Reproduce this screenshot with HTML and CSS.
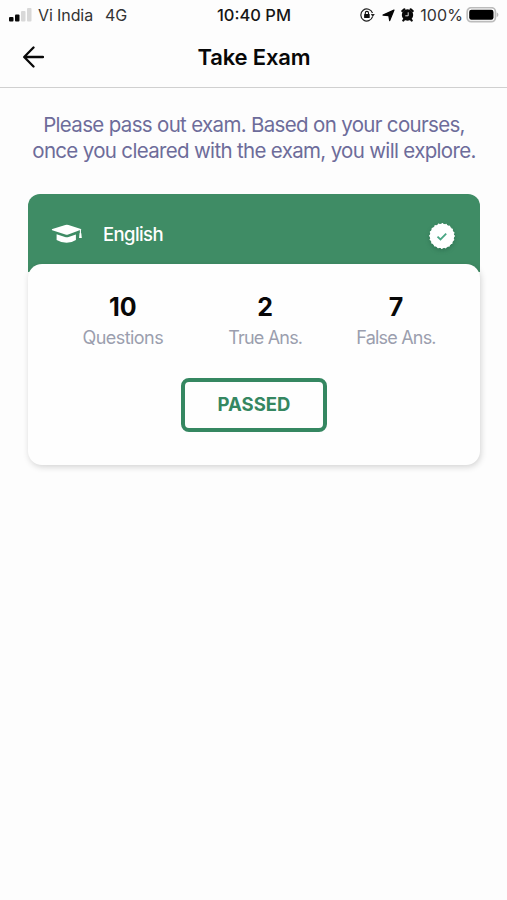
FILE: index.html
```html
<!DOCTYPE html>
<html lang="en">
<head>
<meta charset="utf-8">
<title>Take Exam</title>
<link rel="stylesheet" href="styles.css">
</head>
<body>
<div class="status">
  <div class="status-left">
    <svg class="signal" width="23" height="16" viewBox="0 0 23 16"><g fill="#090909"><rect x="0" y="10" width="4.500" height="4.500" rx="1"/><rect x="6" y="7.500" width="4.500" height="7" rx="1"/></g><g fill="#d8d8d8"><rect x="12" y="4" width="4.500" height="10.500" rx="1"/><rect x="18" y="1" width="4.500" height="13.500" rx="1"/></g></svg>
    <span class="carrier">Vi India</span><span class="network">4G</span>
  </div>
  <span class="clock">10:40 PM</span>
  <div class="status-right">
    <svg width="15" height="14" viewBox="0 0 15 14"><path d="M12.600 8.700A6 6 0 1 1 12.500 5" fill="none" stroke="#222" stroke-width="1.200"/><path d="M10.800 6h4l-2 2.900z" fill="#222"/><rect x="4.100" y="6" width="5.600" height="4" rx=".6" fill="#111"/><path d="M5.300 6.300V5a1.600 1.600 0 0 1 3.200 0v1.300" fill="none" stroke="#111" stroke-width="1.100"/></svg>
    <svg class="location" width="13" height="13" viewBox="0 0 13 13"><path d="M12 1 7.700 11.600 6.800 6.600 1 6.100z" fill="#050505" stroke="#050505" stroke-linejoin="round" stroke-width="1.200"/></svg>
    <svg class="alarm" width="13" height="14" viewBox="0 0 13 14"><circle cx="6.500" cy="7" r="5.700" fill="#080808"/><path d="M1.300 3 3.300 1.300M11.700 3 9.700 1.300M2.300 12.500l1.400-1.600M10.700 12.500l-1.400-1.600" stroke="#080808" stroke-width="2.200" stroke-linecap="round"/><path d="M7.200 4.300v3.500H4.300" fill="none" stroke="#ddd" stroke-width="1"/></svg>
    <span class="percent">100%</span>
    <svg class="battery" width="33" height="16" viewBox="0 0 33 16"><rect x="1.200" y=".7" width="28.200" height="14" rx="4" fill="#fff" stroke="#bcbcbc" stroke-width="1.700"/><rect x="3.200" y="2.700" width="24.300" height="10" rx="2.200" fill="#000"/><path d="M30.700 5.500q1.700.5 1.700 2.200t-1.700 2.200z" fill="#bcbcbc"/></svg>
  </div>
</div>
<header class="nav">
  <svg class="back" width="22" height="22" viewBox="0 0 22 22"><path d="M11.500 1.500 2.200 11l9.300 9.500M2.500 11H21" fill="none" stroke="#080808" stroke-width="2.300" stroke-linecap="round" stroke-linejoin="round"/></svg>
  <h1>Take Exam</h1>
</header>
<main>
  <p class="intro">Please pass out exam. Based on your courses,<br>once you cleared with the exam, you will explore.</p>
  <section class="exam">
    <div class="exam-head">
      <svg class="cap" width="32" height="20" viewBox="0 0 32 20"><path d="M1.200 6.200Q.2 5.500 1.400 5.100L14.300.9q1.600-.5 3.200 0l12.400 4q1.200.5 0 .9L17.200 10.500q-1.400.5-2.800 0z" fill="#fff"/><path d="M5.600 10.200 14 13q1.800.5 3.600 0l7.300-2.600v5.700q-3.700 2.600-9.300 2.600T5.600 16.100z" fill="#fff"/><path d="M29.400 5.600V10" stroke="#fff" stroke-width="1.100"/><path d="M28.500 9.200h1.800l.5 4.700h-2.700z" fill="#fff"/></svg>
      <h2>English</h2>
      <svg class="seal" width="26" height="26" viewBox="0 0 26 26"><circle cx="13" cy="13" r="12.200" fill="#fff"/><circle cx="13" cy="13" r="12" fill="none" stroke="#fff" stroke-width="1.800" stroke-linecap="round" stroke-dasharray=".1 3.670"/><path d="m8.500 13.600 3 2.900 5.700-5.900" fill="none" stroke="#4aa684" stroke-width="1.800"/></svg>
    </div>
    <div class="exam-body">
      <div class="stats">
        <div class="stat"><strong>10</strong><span>Questions</span></div>
        <div class="stat"><strong>2</strong><span>True Ans.</span></div>
        <div class="stat"><strong>7</strong><span>False Ans.</span></div>
      </div>
      <div class="result">PASSED</div>
    </div>
  </section>
</main>
</body>
</html>
```
FILE: styles.css
```css
* { box-sizing: border-box; }
body { margin: 0; min-height: 900px; background: #fdfdfd; color: #080808; font-family: Inter, "Liberation Sans", sans-serif; }
svg { display: block; flex: none; }
h1, h2, p { margin: 0; }
.status { display: grid; grid-template-columns: 1fr auto 1fr; align-items: center; height: 30px; padding: 0 8px 0 9px; font-size: 16px; line-height: 20px; color: #333; white-space: nowrap; }
.status-left, .status-right { display: flex; align-items: center; letter-spacing: -.1px; }
.status-right { justify-content: flex-end; }
.signal { margin-right: 6px; }
.network { margin-left: 12px; }
.clock { font-weight: 500; font-size: 16.500px; color: #151515; }
.location { margin-left: 7px; }
.alarm { margin-left: 6px; }
.percent { margin-left: 6px; letter-spacing: .1px; }
.battery { margin-left: 3px; margin-top: -1px; }
.nav { display: grid; grid-template-columns: 22px 1fr 22px; align-items: center; height: 58px; padding: 0 21px 3px 22px; border-bottom: 1px solid #d0d0d0; }
h1 { text-align: center; font-size: 22px; line-height: 28px; font-weight: 600; letter-spacing: -.15px; }
main { padding: 24px 27px 0 28px; }
.intro { margin: 0 -20px; text-align: center; font-size: 20.500px; line-height: 26px; letter-spacing: -.67px; color: #6d6c9a; white-space: nowrap; }
.exam { margin-top: 30px; }
.exam-head { display: flex; align-items: center; height: 78px; padding: 0 25px 0 23px; background: #3f8c65; border-radius: 12px 12px 0 0; color: #fff; }
.cap { margin-top: 1px; }
h2 { margin: 2px 0 0 20px; font-size: 18.500px; line-height: 24px; font-weight: 500; letter-spacing: -.6px; }
.seal { margin: 6px 0 0 auto; overflow: visible; filter: drop-shadow(0 2px 2px #205c4170); }
.exam-body { position: relative; margin-top: -8px; height: 201px; padding: 29px 0 0; background: #fefefe; border-radius: 14px; box-shadow: 1px 2px 6px #0000002b; }
.stats { display: flex; gap: 54px; padding-left: 54.500px; }
.stat { display: flex; flex-direction: column; align-items: center; }
.stat:first-child { margin-right: 11px; }
.stat strong { font-size: 25px; line-height: 28px; font-weight: 650; }
.stat span { margin-top: 5px; font-size: 18px; line-height: 24px; letter-spacing: -.8px; color: #9b9eae; white-space: nowrap; }
.stat:first-child span { letter-spacing: -.55px; }
.result { width: 146px; height: 54px; margin: 28px auto 0; border: 4px solid #358761; border-radius: 8px; color: #358761; text-align: center; font-size: 18.500px; line-height: 45px; font-weight: 700; }
```
